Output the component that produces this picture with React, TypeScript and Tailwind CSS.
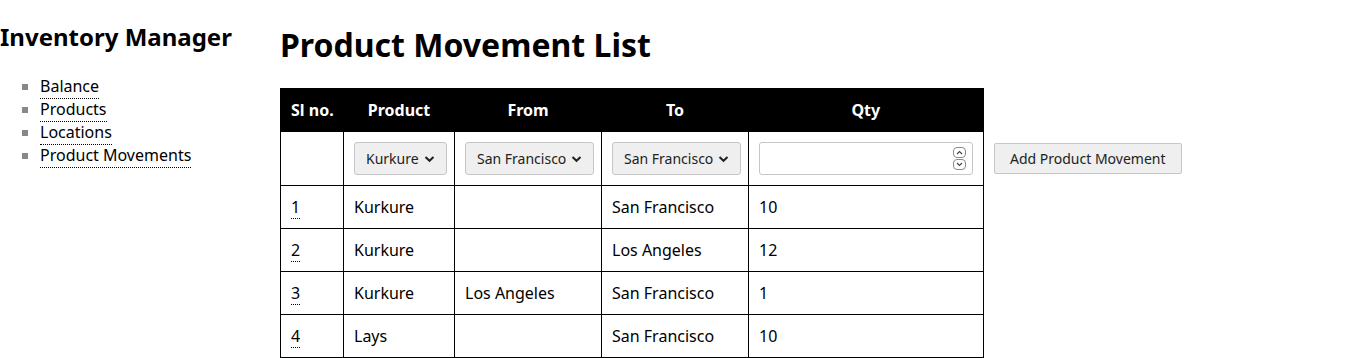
const links = ["Balance", "Products", "Locations", "Product Movements"];

const rows = [
  { id: 1, product: "Kurkure", from: "", to: "San Francisco", qty: 10 },
  { id: 2, product: "Kurkure", from: "", to: "Los Angeles", qty: 12 },
  { id: 3, product: "Kurkure", from: "Los Angeles", to: "San Francisco", qty: 1 },
  { id: 4, product: "Lays", from: "", to: "San Francisco", qty: 10 },
];

const Chevron = () => (
  <svg width="11" height="10" viewBox="0 0 11 10" className="ml-[5px]">
    <path d="M1.5 3 L5.5 6.8 L9.5 3" fill="none" stroke="#222" strokeWidth="2" />
  </svg>
);

const FakeSelect = ({ value }: { value: string }) => (
  <div className="inline-flex h-[33px] items-center whitespace-nowrap rounded-[3px] border border-[#c6c6c6] bg-[#efefef] px-[11px] text-[14px] text-[#222]">
    {value}
    <Chevron />
  </div>
);

const Spinner = () => (
  <div className="flex flex-col gap-[1px]">
    <div className="flex h-[11px] w-[13px] items-center justify-center rounded-[4px] border border-[#8a8a8a]">
      <svg width="7" height="5" viewBox="0 0 7 5">
        <path d="M1 4 L3.5 1.5 L6 4" fill="none" stroke="#444" strokeWidth="1.1" />
      </svg>
    </div>
    <div className="flex h-[11px] w-[13px] items-center justify-center rounded-[4px] border border-[#8a8a8a]">
      <svg width="7" height="5" viewBox="0 0 7 5">
        <path d="M1 1 L3.5 3.5 L6 1" fill="none" stroke="#444" strokeWidth="1.1" />
      </svg>
    </div>
  </div>
);

export default function App() {
  return (
    <div className="flex min-h-[358px] bg-white font-['Noto_Sans',sans-serif] text-[16px] text-black">
      <aside className="w-[280px] shrink-0">
        <h2 className="mt-[21px] text-[24px] font-bold leading-[32px]">Inventory Manager</h2>
        <ul className="mt-[22px] pl-[40px] list-[square] marker:text-[#888]">
          {links.map((l) => (
            <li key={l} className="leading-[23px]">
              <a className="border-b border-dotted border-black pb-[1px]">{l}</a>
            </li>
          ))}
        </ul>
      </aside>

      <main className="flex-1">
        <h1 className="mt-[24px] text-[32px] font-bold leading-[42px]">Product Movement List</h1>
        <div className="mt-[22px] flex items-start">
          <table className="w-[703px] table-fixed border-collapse border border-black whitespace-nowrap">
            <colgroup>
              <col className="w-[63px]" />
              <col className="w-[111px]" />
              <col className="w-[147px]" />
              <col className="w-[147px]" />
              <col className="w-[235px]" />
            </colgroup>
            <thead>
              <tr className="h-[43px] bg-black text-white">
                <th className="px-[10px] font-bold">Sl no.</th>
                <th className="px-[10px] font-bold">Product</th>
                <th className="px-[10px] font-bold">From</th>
                <th className="px-[10px] font-bold">To</th>
                <th className="px-[10px] font-bold">Qty</th>
              </tr>
            </thead>
            <tbody>
              <tr className="h-[54px]">
                <td className="border border-black"></td>
                <td className="border border-black px-[10px]">
                  <FakeSelect value="Kurkure" />
                </td>
                <td className="border border-black px-[10px]">
                  <FakeSelect value="San Francisco" />
                </td>
                <td className="border border-black px-[10px]">
                  <FakeSelect value="San Francisco" />
                </td>
                <td className="border border-black px-[10px]">
                  <div className="flex h-[33px] items-center justify-end rounded-[3px] border border-[#c6c6c6] bg-white pr-[6px]">
                    <Spinner />
                  </div>
                </td>
              </tr>
              {rows.map((r) => (
                <tr key={r.id} className="h-[43px]">
                  <td className="border border-black px-[10px]">
                    <a className="border-b border-dotted border-black">{r.id}</a>
                  </td>
                  <td className="border border-black px-[10px]">{r.product}</td>
                  <td className="border border-black px-[10px]">{r.from}</td>
                  <td className="border border-black px-[10px]">{r.to}</td>
                  <td className="border border-black px-[10px]">{r.qty}</td>
                </tr>
              ))}
            </tbody>
          </table>
          <button className="ml-[10px] mt-[55px] h-[31px] rounded-[2px] border border-[#c6c6c6] bg-[#efefef] px-[15px] text-[14px] text-[#222]">
            Add Product Movement
          </button>
        </div>
      </main>
    </div>
  );
}
